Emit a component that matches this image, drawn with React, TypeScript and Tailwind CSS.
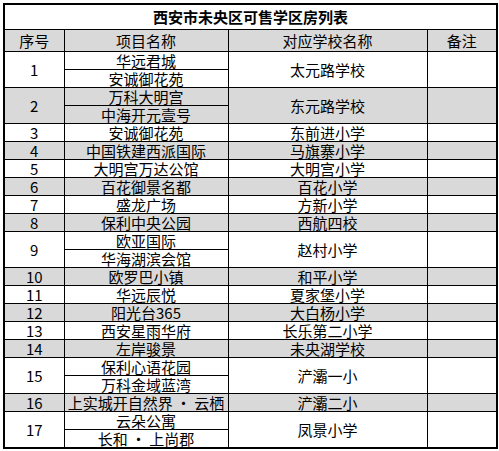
type Row = { no: number; names: string[]; school: string; gray: boolean }

const rows: Row[] = [
  { no: 1, names: ['华远君城', '安诚御花苑'], school: '太元路学校', gray: false },
  { no: 2, names: ['万科大明宫', '中海开元壹号'], school: '东元路学校', gray: true },
  { no: 3, names: ['安诚御花苑'], school: '东前进小学', gray: false },
  { no: 4, names: ['中国铁建西派国际'], school: '马旗寨小学', gray: true },
  { no: 5, names: ['大明宫万达公馆'], school: '大明宫小学', gray: false },
  { no: 6, names: ['百花御景名都'], school: '百花小学', gray: true },
  { no: 7, names: ['盛龙广场'], school: '方新小学', gray: false },
  { no: 8, names: ['保利中央公园'], school: '西航四校', gray: true },
  { no: 9, names: ['欧亚国际', '华海湖滨会馆'], school: '赵村小学', gray: false },
  { no: 10, names: ['欧罗巴小镇'], school: '和平小学', gray: true },
  { no: 11, names: ['华远辰悦'], school: '夏家堡小学', gray: false },
  { no: 12, names: ['阳光台365'], school: '大白杨小学', gray: true },
  { no: 13, names: ['西安星雨华府'], school: '长乐第二小学', gray: false },
  { no: 14, names: ['左岸骏景'], school: '未央湖学校', gray: true },
  { no: 15, names: ['保利心语花园', '万科金域蓝湾'], school: '浐灞一小', gray: false },
  { no: 16, names: ['上实城开自然界 · 云栖'], school: '浐灞二小', gray: true },
  { no: 17, names: ['云朵公寓', '长和 · 上尚郡'], school: '凤景小学', gray: false },
]

const cell = 'border border-black p-0 text-center align-middle leading-[17px]'

export default function App() {
  return (
    <div className="w-[499px] h-[451px] bg-white pl-[3px] pt-[3px] font-['Noto_Sans_CJK_SC',sans-serif] text-[15px] text-black">
      <table className="w-[493px] table-fixed border-collapse border-2 border-black">
        <colgroup>
          <col className="w-[60px]" />
          <col className="w-[164px]" />
          <col className="w-[199px]" />
          <col className="w-[70px]" />
        </colgroup>
        <tbody>
          <tr className="h-[25px]">
            <td colSpan={4} className={`${cell} font-bold`}>
              西安市未央区可售学区房列表
            </td>
          </tr>
          <tr className="h-[22px] bg-[#d9d9d9]">
            <td className={cell}>序号</td>
            <td className={cell}>项目名称</td>
            <td className={cell}>对应学校名称</td>
            <td className={cell}>备注</td>
          </tr>
          {rows.map((r) =>
            r.names.map((name, i) => (
              <tr key={`${r.no}-${i}`} className={`h-[18px] ${r.gray ? 'bg-[#d9d9d9]' : 'bg-white'}`}>
                {i === 0 && (
                  <td rowSpan={r.names.length} className={cell}>
                    {r.no}
                  </td>
                )}
                <td className={`${cell} whitespace-nowrap`}>{name}</td>
                {i === 0 && (
                  <>
                    <td rowSpan={r.names.length} className={cell}>
                      {r.school}
                    </td>
                    <td rowSpan={r.names.length} className={cell}></td>
                  </>
                )}
              </tr>
            ))
          )}
        </tbody>
      </table>
    </div>
  )
}
